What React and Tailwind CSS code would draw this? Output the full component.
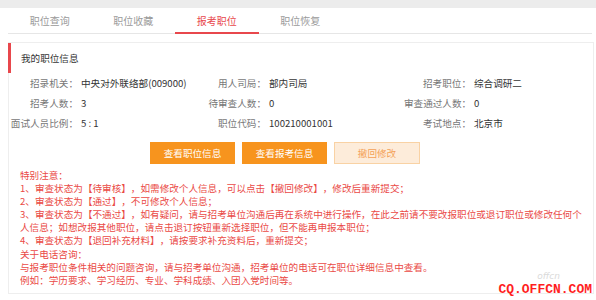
import React from "react";

const tabs = ["职位查询", "职位收藏", "报考职位", "职位恢复"];

const infoRows = [
  [
    ["招录机关：", "中央对外联络部(009000)"],
    ["用人司局：", "部内司局"],
    ["招考职位：", "综合调研二"],
  ],
  [
    ["招考人数：", "3"],
    ["待审查人数：", "0"],
    ["审查通过人数：", "0"],
  ],
  [
    ["面试人员比例：", "5 : 1"],
    ["职位代码：", "100210001001"],
    ["考试地点：", "北京市"],
  ],
];

const notes = [
  "特别注意：",
  "1、审查状态为【待审核】，如需修改个人信息，可以点击【撤回修改】，修改后重新提交；",
  "2、审查状态为【通过】，不可修改个人信息；",
  "3、审查状态为【不通过】，如有疑问，请与招考单位沟通后再在系统中进行操作，在此之前请不要改报职位或退订职位或修改任何个人信息；如想改报其他职位，请点击退订按钮重新选择职位，但不能再申报本职位；",
  "4、审查状态为【退回补充材料】，请按要求补充资料后，重新提交；",
  "关于电话咨询：",
  "与报考职位条件相关的问题咨询，请与招考单位沟通，招考单位的电话可在职位详细信息中查看。",
  "例如：学历要求、学习经历、专业、学科成绩、入团入党时间等。",
];

const App = () => {
  return (
    <div
      className="relative w-[596px] h-[300px] overflow-hidden bg-white text-[9.6px] [text-spacing-trim:space-all]"
      style={{ fontFamily: '"Noto Sans CJK SC", "Noto Sans", sans-serif' }}
    >
      {/* top strip */}
      <div className="h-[8px] bg-[#ececec]" />

      {/* tabs */}
      <div className="mx-[8px] mr-[4px] flex h-[26px] border-b border-[#e6e6e6]">
        {tabs.map((t, i) => (
          <div
            key={t}
            className={`w-[83.5px] flex items-center justify-center text-[10px] ${
              i === 2
                ? "text-[#e8474c] border-b-2 border-[#e8474c] -mb-px"
                : "text-[#9a9a9a]"
            }`}
          >
            {t}
          </div>
        ))}
      </div>

      {/* card */}
      <div className="mt-[8px] ml-[8px] mr-[2px] h-[252px] border border-[#eeeeee]">
        <div className="-ml-px h-[30px] border-l-[3px] border-[#e8474c] pl-[10px] flex items-center text-[#333]">
          我的职位信息
        </div>

        {/* info grid */}
        <div className="flex flex-col">
          {infoRows.map((row, r) => (
            <div key={r} className="grid grid-cols-[190px_205px_1fr] h-[20px] items-center">
              {row.map(([label, value], c) => (
                <div key={c} className="flex items-center">
                  <span
                    className={`${c === 0 ? "w-[69px]" : "w-[67px]"} text-right text-[#777] whitespace-nowrap`}
                  >
                    {label}
                  </span>
                  <span className="ml-[3px] text-[#333] whitespace-nowrap">{value}</span>
                </div>
              ))}
            </div>
          ))}
        </div>

        {/* buttons */}
        <div className="mt-[9px] pl-[141px] flex gap-[7px]">
          <button className="w-[85px] h-[22px] bg-[#f7941e] text-white">查看职位信息</button>
          <button className="w-[85px] h-[22px] bg-[#f7941e] text-white">查看报考信息</button>
          <button className="w-[86px] h-[22px] bg-[#fdecda] border border-[#f9d2a4] text-[#f4a257]">
            撤回修改
          </button>
        </div>

        {/* notes */}
        <div className="mt-[5px] pl-[11px] pr-[10px] text-[#ea4a46] leading-[13.1px]">
          {notes.map((n, i) => (
            <p key={i}>{n}</p>
          ))}
        </div>
      </div>

      {/* watermark */}
      <div
        className="absolute right-[36px] bottom-[19px] text-[#dadada] text-[9px] leading-none italic"
        style={{ fontFamily: '"DejaVu Sans", sans-serif' }}
      >
        offcn
      </div>
      <div
        className="absolute right-[4px] bottom-[4px] text-[#ff1f1f] text-[13px] font-bold leading-none"
        style={{ fontFamily: '"Liberation Mono", monospace' }}
      >
        CQ.OFFCN.COM
      </div>
    </div>
  );
};

export default App;
